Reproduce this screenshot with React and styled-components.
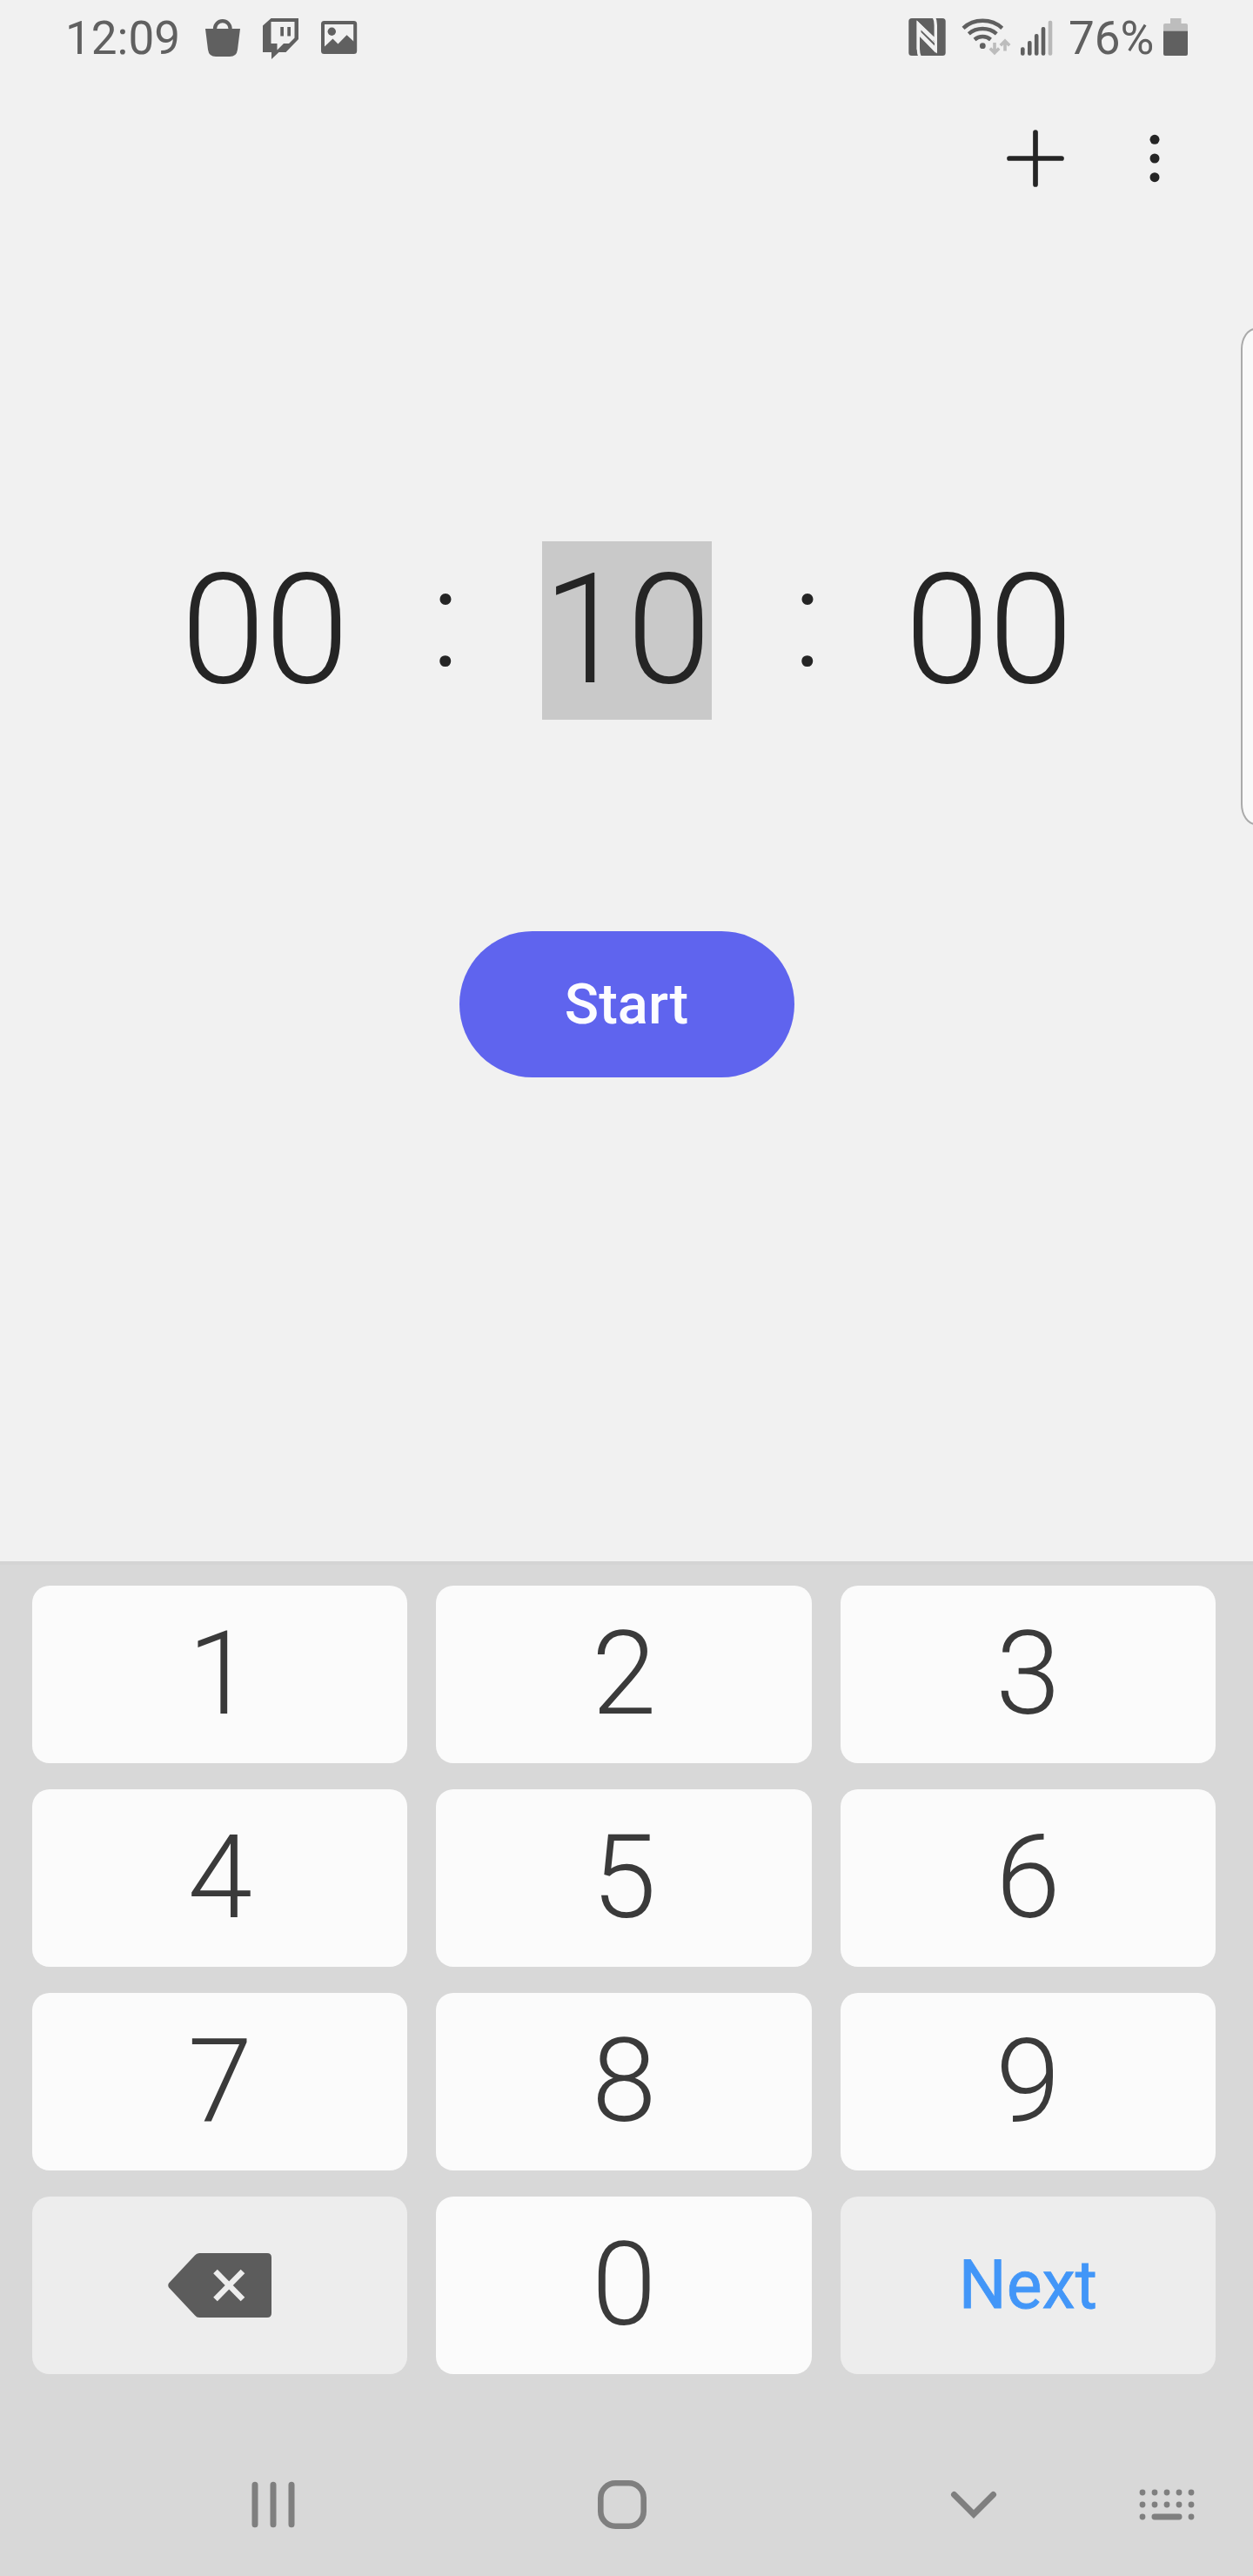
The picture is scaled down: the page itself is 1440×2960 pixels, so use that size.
import React from "react";
import styled, { createGlobalStyle } from "styled-components";

const Global = createGlobalStyle`
  * { box-sizing: border-box; }
  body { margin: 0; background: #f1f1f1; }
  button { border: 0; margin: 0; padding: 0; background: none; font: inherit; color: inherit; }
  svg { display: block; }
`;

const Screen = styled.div`
  position: relative;
  display: flex;
  flex-direction: column;
  width: 1440px;
  height: 2960px;
  overflow: hidden;
  background: #f1f1f1;
  font-family: Roboto, "Liberation Sans", sans-serif;
`;

const StatusBar = styled.header`
  display: flex;
  justify-content: space-between;
  height: 90px;
  padding: 0 75px;
  color: #606060;
`;

const StatusGroup = styled.div`
  display: flex;
  align-items: flex-start;
`;

const StatusText = styled.span`
  width: ${(p) => p.$width}px;
  margin-left: ${(p) => p.$gap || 0}px;
  line-height: 62px;
  padding-top: 13px;
  font-size: 53px;
  white-space: nowrap;
`;

const StatusIcon = styled.svg`
  flex: none;
  margin: 18px 0 0 ${(p) => p.$gap}px;
`;

const Toolbar = styled.div`
  display: flex;
  justify-content: flex-end;
  align-items: center;
  gap: 62px;
  height: 184px;
  padding-right: 76px;
`;

const IconButton = styled.button`
  display: grid;
  place-items: center;
  width: 75px;
  height: 75px;
`;

const Timer = styled.main`
  display: flex;
  flex-direction: column;
  align-items: center;
  flex: 1;
  padding-top: 348px;
`;

const Clock = styled.div`
  display: flex;
  height: 205px;
  color: #252525;
  font-size: 175.5px;
  font-weight: 300;
  line-height: 205px;
`;

const Digits = styled.span`
  width: 195px;
  text-align: center;
  letter-spacing: -1.2px;
  background: ${(p) => (p.$selected ? "#c9c9c9" : "transparent")};
`;

const Separator = styled.span`
  width: 221px;
  font-size: 157px;
  line-height: 178px;
  text-align: center;
`;

const StartButton = styled.button`
  width: 385px;
  height: 168px;
  margin-top: 243px;
  border-radius: 84px;
  background: #5f64ee;
  color: #fcfcff;
  font-size: 65px;
  font-weight: 500;
  line-height: 168px;
`;

const Keyboard = styled.section`
  display: flex;
  flex-direction: column;
  height: 1166px;
  border-top: 4px solid #d4d4d4;
  background: #d8d8d8;
`;

const Keys = styled.div`
  display: grid;
  grid-template-columns: repeat(3, 431.3px);
  grid-auto-rows: 204px;
  gap: 30px 33px;
  padding: 24px 0 0 37.2px;
`;

const Key = styled.button`
  display: flex;
  align-items: center;
  justify-content: center;
  border-radius: 20px;
  background: #fbfbfb;
  color: #3a3a3a;
  font-size: 134px;
  font-weight: 300;
  line-height: 1;
`;

const ActionKey = styled(Key)`
  background: #ededed;
  color: #4296f8;
  font-size: 77px;
  font-weight: 400;
  -webkit-text-stroke: 0.8px currentColor;
`;

const NavBar = styled.nav`
  display: flex;
  align-items: center;
  height: 164px;
  margin-top: auto;
  color: #7f7f7f;
`;

const NavItem = styled.div`
  display: flex;
  justify-content: center;
  width: ${(p) => p.$width}px;
`;

const EdgePanel = styled.aside`
  position: absolute;
  left: 1426px;
  top: 377px;
  width: 34px;
  height: 571px;
  border: 2px solid #aaaaaa;
  border-radius: 17px / 24px;
  background: #f9f9f9;
`;

const Bag = () => (
  <StatusIcon $gap={30} width="42" height="50" viewBox="235 18 42 50">
    <path d="M236 33H276L273 57Q272 65 264 65H248Q240 65 239 57Z" fill="#606060" />
    <path d="M247 34V33A8.8 8.8 0 0 1 264.600 33V34" fill="none" stroke="#606060" strokeWidth="4.200" />
  </StatusIcon>
);

const Twitch = () => (
  <StatusIcon $gap={23} width="44" height="50" viewBox="300 18 44 50">
    <path
      fillRule="evenodd"
      fill="#606060"
      d="M311.500 21H343V45L328.500 60H320.500L312 68V60H302V29.500ZM311.500 25V50H318.500V57.500L326 50H332L338.500 43.500V25Z"
    />
    <path d="M322.300 31h3.700v10.500h-3.700zM330.300 31h3.700v10.500h-3.700z" fill="#606060" />
  </StatusIcon>
);

const Picture = () => (
  <StatusIcon $gap={24} width="44" height="50" viewBox="368 18 44 50">
    <rect x="371" y="26" width="37.200" height="34" rx="1.500" fill="none" stroke="#606060" strokeWidth="4" />
    <circle cx="381.300" cy="36.300" r="4.700" fill="#606060" />
    <path d="M372 54.500L382.500 44.500L388.500 50.500L398.500 40.300L408 49V60H372Z" fill="#606060" />
  </StatusIcon>
);

const Nfc = () => (
  <StatusIcon $gap={0} width="44" height="50" viewBox="1042 18 44 50">
    <rect x="1043.300" y="21" width="42.400" height="43" rx="3.500" fill="#606060" />
    <path
      fill="none"
      stroke="#f1f1f1"
      strokeWidth="3.400"
      strokeLinejoin="miter"
      d="M1056.500 66Q1054.300 62 1054.300 56V27.500L1074.300 46.500M1072 19Q1074.300 23 1074.300 29V57.500L1056.300 39.500"
    />
    <path d="M1052.600 23.500L1071.500 42V46.500L1074.500 50V61L1056 42V57H1052.600Z" fill="#f1f1f1" />
    <path d="M1057.500 37L1073 52.500V49.500L1057.500 34.500Z" fill="#606060" />
  </StatusIcon>
);

const Wifi = () => (
  <StatusIcon $gap={18} width="58" height="50" viewBox="1104 18 58 50">
    <g fill="none" stroke="#606060" strokeWidth="4.400">
      <path d="M1106 32.300Q1115 23.700 1128.300 23.700T1150.700 32.300" />
      <path d="M1112.300 38.800Q1119 33 1128.300 33T1144.300 38.800" />
      <path d="M1119 45.500Q1123 42 1128.300 42T1137.500 45.500" />
    </g>
    <circle cx="1128.300" cy="52.700" r="3.400" fill="#606060" />
    <g fill="none" stroke="#bcbcbc" strokeWidth="3.600">
      <path d="M1142 49V61M1136.800 55.500L1142 60.700L1147.200 55.500" />
      <path d="M1154 58.500V47M1148.800 52.300L1154 47.100L1159.200 52.300" />
    </g>
  </StatusIcon>
);

const Signal = () => (
  <StatusIcon $gap={9} width="40" height="50" viewBox="1171 18 40 50">
    <g fill="#606060">
      <rect x="1172" y="54.300" width="4.600" height="9.400" rx="2" />
      <rect x="1180" y="47" width="4.600" height="16.700" rx="2" />
      <rect x="1187.900" y="39" width="4.600" height="24.700" rx="2" />
      <rect x="1195.700" y="31" width="4.600" height="32.700" rx="2" />
    </g>
    <rect x="1203.700" y="23.700" width="4.600" height="40" rx="2" fill="#b8b8b8" />
  </StatusIcon>
);

const Battery = () => (
  <StatusIcon $gap={9} width="29" height="50" viewBox="1336 18 29 50">
    <path d="M1345 21H1357.500V27H1363Q1365 27 1365 29V37H1337V29Q1337 27 1339 27H1345Z" fill="#bdbdbd" />
    <path d="M1337 35.700H1365V62Q1365 64 1363 64H1339Q1337 64 1337 62Z" fill="#606060" />
  </StatusIcon>
);

const Backspace = () => (
  <svg width="121" height="76" viewBox="0 0 121 76">
    <path d="M37 1H115Q120 1 120 6V70Q120 75 115 75H37Q34 75 32 72.500L2 40.500Q0.500 38 2 35.500L32 3.500Q34 1 37 1Z" fill="#5c5c5c" />
    <path d="M55.500 22L87 54M87 22L55.500 54" stroke="#ededed" strokeWidth="6.500" />
  </svg>
);

const KeyboardToggle = styled.div`
  margin-left: -125px;
`;

const digits = ["1", "2", "3", "4", "5", "6", "7", "8", "9"];

export default function App() {
  return (
    <Screen>
      <Global />
      <StatusBar>
        <StatusGroup>
          <StatusText $width={130}>12:09</StatusText>
          <Bag />
          <Twitch />
          <Picture />
        </StatusGroup>
        <StatusGroup>
          <Nfc />
          <Wifi />
          <Signal />
          <StatusText $gap={16} $width={99}>76%</StatusText>
          <Battery />
        </StatusGroup>
      </StatusBar>
      <Toolbar>
        <IconButton aria-label="Add">
          <svg width="68" height="68" viewBox="0 0 68 68">
            <path d="M34 4V64M4 34H64" stroke="#252525" strokeWidth="5.700" strokeLinecap="round" />
          </svg>
        </IconButton>
        <IconButton aria-label="More options">
          <svg width="12" height="56" viewBox="0 0 12 56" fill="#252525">
            <circle cx="6" cy="6.300" r="5.500" />
            <circle cx="6" cy="28" r="5.500" />
            <circle cx="6" cy="49.700" r="5.500" />
          </svg>
        </IconButton>
      </Toolbar>
      <Timer>
        <Clock>
          <Digits>00</Digits>
          <Separator>:</Separator>
          <Digits $selected>10</Digits>
          <Separator>:</Separator>
          <Digits>00</Digits>
        </Clock>
        <StartButton>Start</StartButton>
      </Timer>
      <Keyboard>
        <Keys>
          {digits.map((n) => (
            <Key key={n}>{n}</Key>
          ))}
          <ActionKey aria-label="Backspace">
            <Backspace />
          </ActionKey>
          <Key>0</Key>
          <ActionKey>Next</ActionKey>
        </Keys>
        <NavBar>
          <NavItem $width={627}>
            <svg width="50" height="54" viewBox="0 0 50 54">
              <path d="M4 4.200V49.800M25 4.200V49.800M46 4.200V49.800" stroke="currentColor" strokeWidth="7" strokeLinecap="round" />
            </svg>
          </NavItem>
          <NavItem $width={176}>
            <svg width="56" height="56" viewBox="0 0 56 56">
              <rect x="3.300" y="3.300" width="49.400" height="49.400" rx="17" fill="none" stroke="currentColor" strokeWidth="6.600" />
            </svg>
          </NavItem>
          <NavItem $width={631}>
            <svg width="54" height="34" viewBox="0 0 54 34">
              <path d="M4.500 5.500L27 28L49.500 5.500" fill="none" stroke="currentColor" strokeWidth="7" strokeLinecap="round" />
            </svg>
          </NavItem>
          <KeyboardToggle>
            <svg width="64" height="36" viewBox="0 0 64 36" fill="currentColor">
              {[4, 18, 32, 46, 60].map((x) => (
                <React.Fragment key={x}>
                  <circle cx={x} cy="4" r="3.400" />
                  <circle cx={x} cy="18" r="3.400" />
                </React.Fragment>
              ))}
              <circle cx="4" cy="32" r="3.400" />
              <rect x="14.500" y="28.600" width="35" height="6.800" rx="3.400" />
              <circle cx="60" cy="32" r="3.400" />
            </svg>
          </KeyboardToggle>
        </NavBar>
      </Keyboard>
      <EdgePanel />
    </Screen>
  );
}
